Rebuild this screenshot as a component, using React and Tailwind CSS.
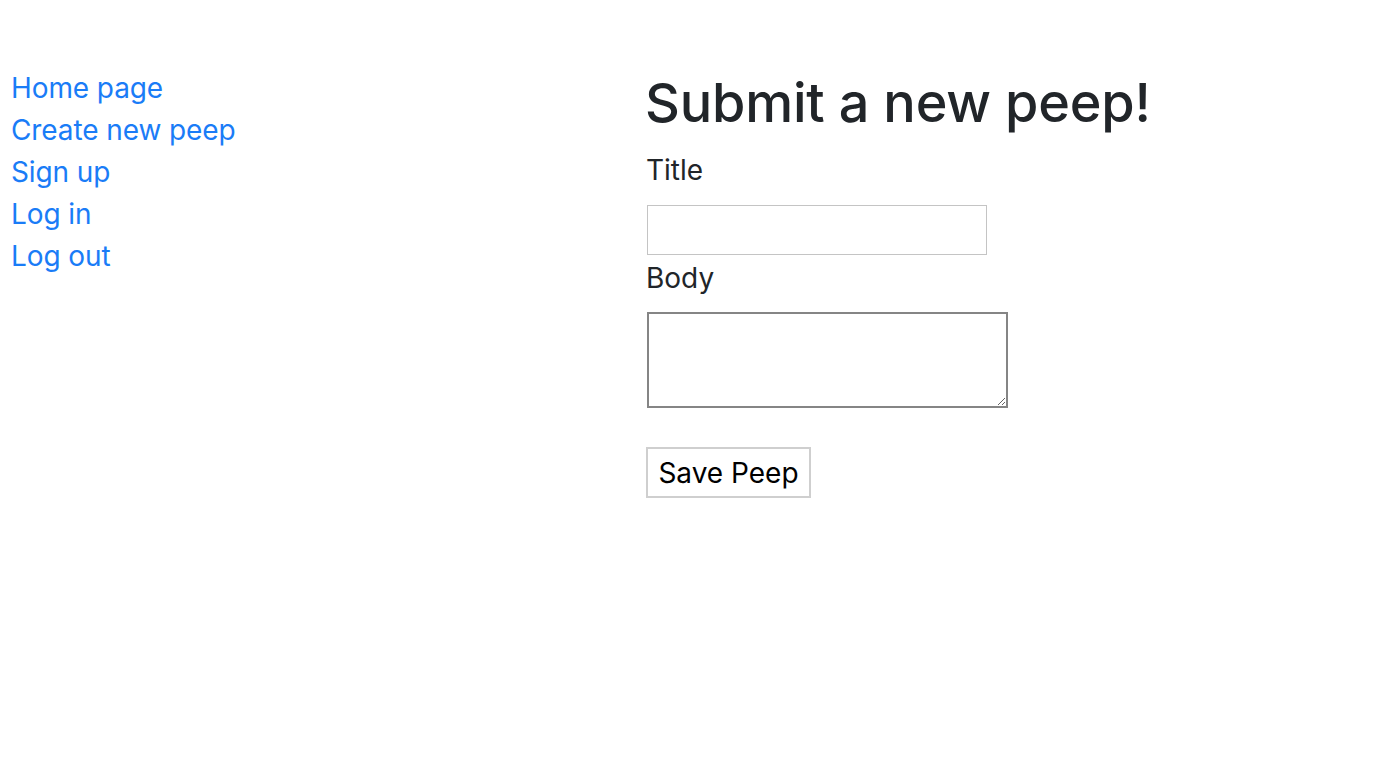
const links = ['Home page', 'Create new peep', 'Sign up', 'Log in', 'Log out']

export default function App() {
  return (
    <div className="min-h-[764px] bg-white font-['Inter','Noto_Sans',sans-serif] text-[#212529]">
      <div className="flex pl-[11px] pt-[67px]">
        <nav className="flex w-[635px] flex-col">
          {links.map((label) => (
            <a key={label} href="#" className="text-[28px] leading-[42px] tracking-[-0.1px] text-[#1a7cf7]">
              {label}
            </a>
          ))}
        </nav>

        <main className="flex flex-col items-start pt-[3px]">
          <h1 className="-ml-[1px] text-[54px] leading-[66px] font-medium tracking-[-0.2px]">Submit a new peep!</h1>
          <form className="mt-[13px] flex flex-col items-start">
            <label className="text-[28px] leading-[42px]">Title</label>
            <input type="text" className="mt-[14px] ml-[1px] h-[50px] w-[340px] border border-[#c4c4c4] bg-white" />
            <label className="mt-[2px] text-[28px] leading-[42px]">Body</label>
            <textarea className="mt-[13px] ml-[1px] h-[96px] w-[361px] border-2 border-[#858585] bg-white" />
            <button
              type="button"
              className="mt-[39px] h-[51px] w-[165px] border-2 border-[#cfcfcf] bg-white text-[28px] text-black"
            >
              Save Peep
            </button>
          </form>
        </main>
      </div>
    </div>
  )
}
